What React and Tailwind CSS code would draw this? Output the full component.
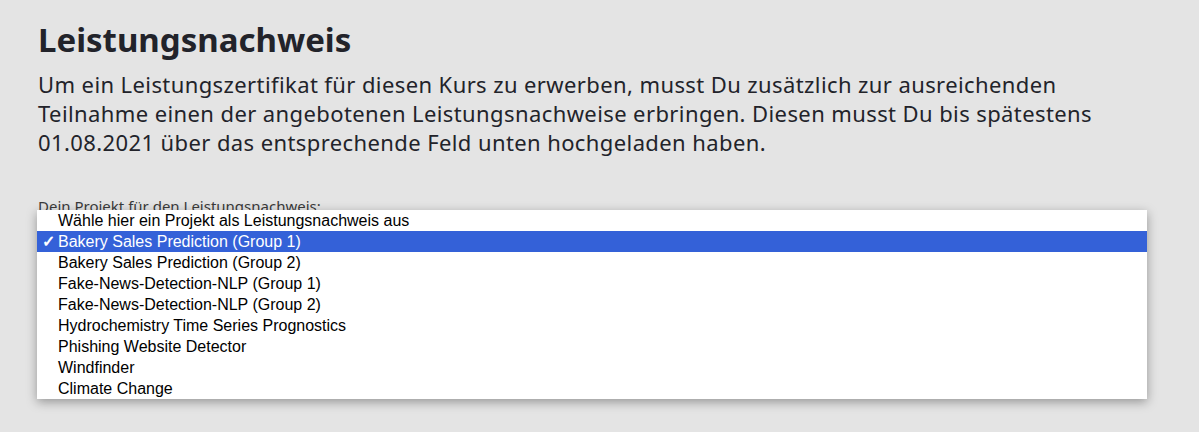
import React from "react";

const items = [
  "Wähle hier ein Projekt als Leistungsnachweis aus",
  "Bakery Sales Prediction (Group 1)",
  "Bakery Sales Prediction (Group 2)",
  "Fake-News-Detection-NLP (Group 1)",
  "Fake-News-Detection-NLP (Group 2)",
  "Hydrochemistry Time Series Prognostics",
  "Phishing Website Detector",
  "Windfinder",
  "Climate Change",
];

export default function App() {
  return (
    <div className="w-[1199px] h-[432px] bg-[#e4e4e4] overflow-hidden font-['Noto_Sans',sans-serif] text-[#22232a]">
      <div className="pl-[38px] pr-[40px] pt-[18px]">
        <h1 className="text-[33px] leading-[44px] font-bold">Leistungsnachweis</h1>
        <p className="mt-[8px] text-[22px] leading-[29px] tracking-[0.4px] w-[1060px]">
          Um ein Leistungszertifikat für diesen Kurs zu erwerben, musst Du zusätzlich zur ausreichenden Teilnahme einen der angebotenen Leistungsnachweise erbringen. Diesen musst Du bis spätestens 01.08.2021 über das entsprechende Feld unten hochgeladen haben.
        </p>
        <div className="relative mt-[39px]">
          <div className="text-[15px] leading-[20px] text-[#3a3a3a]">Dein Projekt für den Leistungsnachweis:</div>
          <div className="absolute left-[-1px] top-[14px] w-[1110px] bg-white shadow-[0_3px_10px_rgba(0,0,0,0.35)] font-['Liberation_Sans',Arial,sans-serif] text-[16px] text-black">
            {items.map((t, i) => (
              <div
                key={i}
                className={
                  "relative h-[21px] leading-[21px] pl-[21px] " +
                  (i === 1 ? "bg-[#3461d8] text-white" : "")
                }
              >
                {i === 1 && <span className="absolute left-[5px] top-0 font-bold">✓</span>}
                {t}
              </div>
            ))}
          </div>
        </div>
      </div>
    </div>
  );
}
